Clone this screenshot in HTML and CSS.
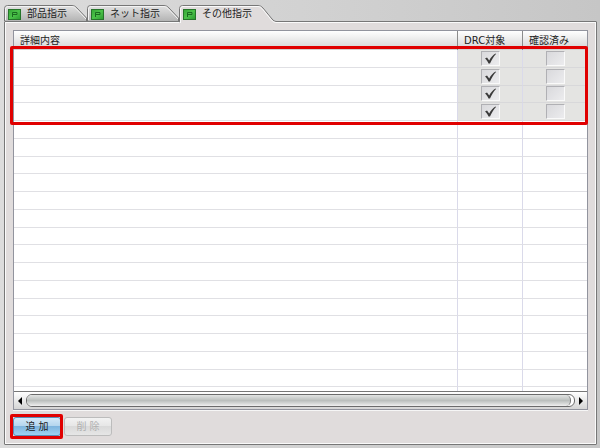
FILE: index.html
```
<!DOCTYPE html>
<html lang="ja">
<head>
  <meta charset="UTF-8">
  <meta name="viewport" content="width=device-width, initial-scale=1.0">
  <title>その他指示</title>
  <link rel="stylesheet" href="styles.css">
</head>
<body>
  <!-- shared icons -->
  <svg class="defs" width="0" height="0" aria-hidden="true">
    <defs>
      <linearGradient id="tab-fill" x1="0" y1="0" x2="0" y2="1">
        <stop offset="0" stop-color="#e2e2e2"/>
        <stop offset="0.45" stop-color="#cecece"/>
        <stop offset="1" stop-color="#b4b4b4"/>
      </linearGradient>
      <linearGradient id="icon-fill" x1="0" y1="0" x2="1" y2="1">
        <stop offset="0" stop-color="#35a435"/>
        <stop offset="0.5" stop-color="#4cc34a"/>
        <stop offset="1" stop-color="#2c9a30"/>
      </linearGradient>
      <symbol id="icon-sheet" viewBox="0 0 13 11">
        <rect x="0.5" y="0.5" width="12" height="10" fill="url(#icon-fill)" stroke="#26752a"/>
        <path d="M4.5 8V3.5H9V5.5H5" fill="none" stroke="#1b6a20"/>
      </symbol>
      <symbol id="icon-check" viewBox="0 0 19 15">
        <path d="M4 7.5L6 6.5L8.2 9.5C9.8 6.5 12 4 14.5 2.5L15 3C12.5 5.5 10.5 9 9 12.5H7.5C6.7 10.5 5.5 8.7 4 7.5Z" fill="#3a3a3a"/>
      </symbol>
    </defs>
  </svg>

  <div class="tabs" role="tablist">
    <button type="button" class="tab" role="tab">
      <svg class="tab-shape" viewBox="0 0 83 16">
        <path d="M0.5 16V3.5Q0.5 0.5 3.5 0.5H68Q71 0.5 73 3L82.5 13V16" fill="url(#tab-fill)" stroke="#777"/>
        <path d="M1.5 15V4Q1.5 1.5 4 1.5H68Q70.5 1.5 72 3.5L82 14" fill="none" stroke="#f3f3f3"/>
      </svg>
      <svg class="icon"><use href="#icon-sheet"/></svg>
      <span>部品指示</span>
    </button>
    <button type="button" class="tab tab-wide" role="tab">
      <svg class="tab-shape" viewBox="0 0 92 16">
        <path d="M0.5 16V3.5Q0.5 0.5 3.5 0.5H77Q80 0.5 82 3L91.5 13V16" fill="url(#tab-fill)" stroke="#777"/>
        <path d="M1.5 15V4Q1.5 1.5 4 1.5H77Q79.5 1.5 81 3.5L91 14" fill="none" stroke="#f3f3f3"/>
      </svg>
      <svg class="icon"><use href="#icon-sheet"/></svg>
      <span>ネット指示</span>
    </button>
    <button type="button" class="tab tab-active" role="tab" aria-selected="true">
      <svg class="tab-shape" viewBox="0 0 97 18">
        <path d="M0 18V3Q0 0 3 0H79Q82 0 84 3L93 14Q95 17 97 17V18Z" fill="#e0dcdc"/>
        <path d="M0.5 17V3.5Q0.5 0.5 3.5 0.5H79Q82 0.5 84 3L93 14Q95 16.5 97 16.5" fill="none" stroke="#777"/>
        <path d="M1.5 18V4Q1.5 1.5 4 1.5H79Q81.5 1.5 83 3.5L92 14.5Q94 17.5 97 17.5" fill="none" stroke="#fafafa"/>
      </svg>
      <svg class="icon"><use href="#icon-sheet"/></svg>
      <span>その他指示</span>
    </button>
  </div>

  <main class="panel">
    <div class="list-area">
      <div class="list">
        <div class="list-body">
          <table>
            <colgroup><col><col class="col-flag"><col class="col-flag"></colgroup>
            <thead>
              <tr><th>詳細内容</th><th>DRC対象</th><th>確認済み</th></tr>
            </thead>
            <tbody>
              <tr class="item"><td></td><td><label class="check"><input type="checkbox" aria-label="DRC対象 1" checked><svg><use href="#icon-check"/></svg></label></td><td><label class="check"><input type="checkbox" aria-label="確認済み 1"></label></td></tr>
              <tr class="item"><td></td><td><label class="check"><input type="checkbox" aria-label="DRC対象 2" checked><svg><use href="#icon-check"/></svg></label></td><td><label class="check"><input type="checkbox" aria-label="確認済み 2"></label></td></tr>
              <tr class="item"><td></td><td><label class="check"><input type="checkbox" aria-label="DRC対象 3" checked><svg><use href="#icon-check"/></svg></label></td><td><label class="check"><input type="checkbox" aria-label="確認済み 3"></label></td></tr>
              <tr class="item"><td></td><td><label class="check"><input type="checkbox" aria-label="DRC対象 4" checked><svg><use href="#icon-check"/></svg></label></td><td><label class="check"><input type="checkbox" aria-label="確認済み 4"></label></td></tr>
              <tr><td></td><td></td><td></td></tr>
              <tr><td></td><td></td><td></td></tr>
              <tr><td></td><td></td><td></td></tr>
              <tr><td></td><td></td><td></td></tr>
              <tr><td></td><td></td><td></td></tr>
              <tr><td></td><td></td><td></td></tr>
              <tr><td></td><td></td><td></td></tr>
              <tr><td></td><td></td><td></td></tr>
              <tr><td></td><td></td><td></td></tr>
              <tr><td></td><td></td><td></td></tr>
              <tr><td></td><td></td><td></td></tr>
              <tr><td></td><td></td><td></td></tr>
              <tr><td></td><td></td><td></td></tr>
              <tr><td></td><td></td><td></td></tr>
              <tr><td></td><td></td><td></td></tr>
              <tr><td></td><td></td><td></td></tr>
            </tbody>
          </table>
        </div>
        <div class="scrollbar">
          <button type="button" class="arrow" aria-label="左へ"><svg viewBox="0 0 4 8"><path d="M4 0V8L0 4Z"/></svg></button>
          <div class="track"><div class="thumb"></div></div>
          <button type="button" class="arrow" aria-label="右へ"><svg viewBox="0 0 4 8"><path d="M0 0V8L4 4Z"/></svg></button>
        </div>
      </div>
      <div class="mark mark-rows"></div>
    </div>

    <div class="actions">
      <div class="action">
        <button type="button" class="btn btn-add">追 加</button>
        <div class="mark mark-btn"></div>
      </div>
      <button type="button" class="btn" disabled>削 除</button>
    </div>
  </main>
</body>
</html>
```

FILE: styles.css
```
* {
  box-sizing: border-box;
}
body {
  display: flex;
  flex-direction: column;
  min-height: 100vh;
  margin: 0;
  padding: 5px 3px 3px 4px;
  background: linear-gradient(90deg, #dcdcdc, #d2d2d2 50%, #c6c6c6);
  font-family: "DejaVu Sans", "Noto Sans CJK JP", sans-serif;
  font-size: 10px;
  color: #222;
}
button {
  margin: 0;
  padding: 0;
  border: none;
  background: none;
  font: inherit;
  color: inherit;
}
svg {
  display: block;
}
.defs {
  position: absolute;
}

/* tabs */
.tabs {
  display: flex;
  align-items: flex-end;
  height: 16px;
}
.tab {
  position: relative;
  display: flex;
  align-items: center;
  gap: 6px;
  width: 83px;
  height: 16px;
  padding: 2px 0 0 4px;
  line-height: 16px;
}
.tab-wide {
  width: 92px;
}
.tab-active {
  z-index: 1;
  width: 97px;
}
.tab-shape {
  position: absolute;
  left: 0;
  bottom: 0;
  width: 100%;
}
.tab-active .tab-shape {
  bottom: -2px;
}
.icon {
  position: relative;
  width: 13px;
  height: 11px;
}
.tab span {
  position: relative;
}

/* panel */
.panel {
  flex: 1;
  display: flex;
  flex-direction: column;
  padding: 7px 7px 8px;
  border: 1px solid #777;
  border-radius: 1px;
  background: #e0dcdc;
  box-shadow: inset 0 0 0 1px #fafafa;
}
.list-area {
  position: relative;
  flex: 1;
  display: flex;
  margin: 1px;
}
.list {
  flex: 1;
  display: flex;
  flex-direction: column;
  border: 1px solid #92949e;
  background: #fff;
  box-shadow: 0 1px #f6f6f6;
}
.list-body {
  flex: 1 1 0;
  overflow: hidden;
}
table {
  width: 100%;
  height: 374px;
  table-layout: fixed;
  border-collapse: separate;
  border-spacing: 0;
}
.col-flag {
  width: 65px;
}
th {
  height: 19px;
  padding: 1px 6px 0;
  border-left: 1px solid #8c8c8c;
  background: linear-gradient(#fff, #e9e9e9 50%, #d2d2d2);
  font-weight: normal;
  line-height: 18px;
  text-align: left;
}
td {
  height: 17px;
  padding: 0;
  border-left: 1px solid #dadaea;
  border-bottom: 1px solid #e0e0e4;
}
th:first-child,
td:first-child {
  border-left: none;
}
.item td + td {
  background: #e4e4e2;
  border-bottom-color: #d8d8da;
}
.check {
  position: relative;
  display: block;
  width: 19px;
  height: 15px;
  margin: 0 auto;
}
.check input {
  display: block;
  width: 19px;
  height: 15px;
  margin: 0;
  appearance: none;
  border: 1px solid;
  border-color: #b0b0b4 #fafafa #fafafa #b0b0b4;
  background: linear-gradient(135deg, #d9d9dc, #ececee);
}
.check svg {
  position: absolute;
  top: 0;
  left: 0;
  width: 19px;
  height: 15px;
  pointer-events: none;
}
.check input:not(:checked) + svg {
  display: none;
}

/* scrollbar */
.scrollbar {
  display: flex;
  align-items: center;
  height: 18px;
  border-top: 1px solid #777;
  background: linear-gradient(#fff, #d4d4d4);
}
.arrow {
  display: flex;
  justify-content: center;
  width: 12px;
}
.arrow svg {
  width: 4px;
  height: 8px;
}
.track {
  flex: 1;
  height: 13px;
  padding-right: 3px;
  border: 1px solid #6b6b6b;
  border-radius: 6px;
  background: #fff;
}
.thumb {
  height: 11px;
  border-right: 1px solid #777;
  border-radius: 5px;
  background: linear-gradient(#e2e4e3, #bbbfbd 50%, #d9dbda 80%, #f0f0f0);
}

/* buttons */
.actions {
  display: flex;
  gap: 3px;
  padding: 6px 1px 0;
}
.action {
  position: relative;
}
.btn {
  display: block;
  width: 48px;
  height: 19px;
  border: 1px solid #bcbcbc;
  border-radius: 3px;
  background: linear-gradient(#f2f2f2, #e6e6e6 50%, #dadada 50%, #e6e6e6);
  line-height: 17px;
}
.btn:disabled {
  color: #b0b0b0;
}
.btn-add {
  border-color: #5b8db5;
  background: linear-gradient(#d4e9f8, #b2d4ed 50%, #7fb5de 50%, #9ed2f2);
}

/* red frames */
.mark {
  position: absolute;
  border: 3px solid #e00000;
  border-radius: 2px;
  pointer-events: none;
}
.mark-rows {
  top: 16px;
  left: -3px;
  right: 0;
  height: 79px;
}
.mark-btn {
  top: -3px;
  left: -3px;
  right: -2px;
  bottom: -3px;
}
```
